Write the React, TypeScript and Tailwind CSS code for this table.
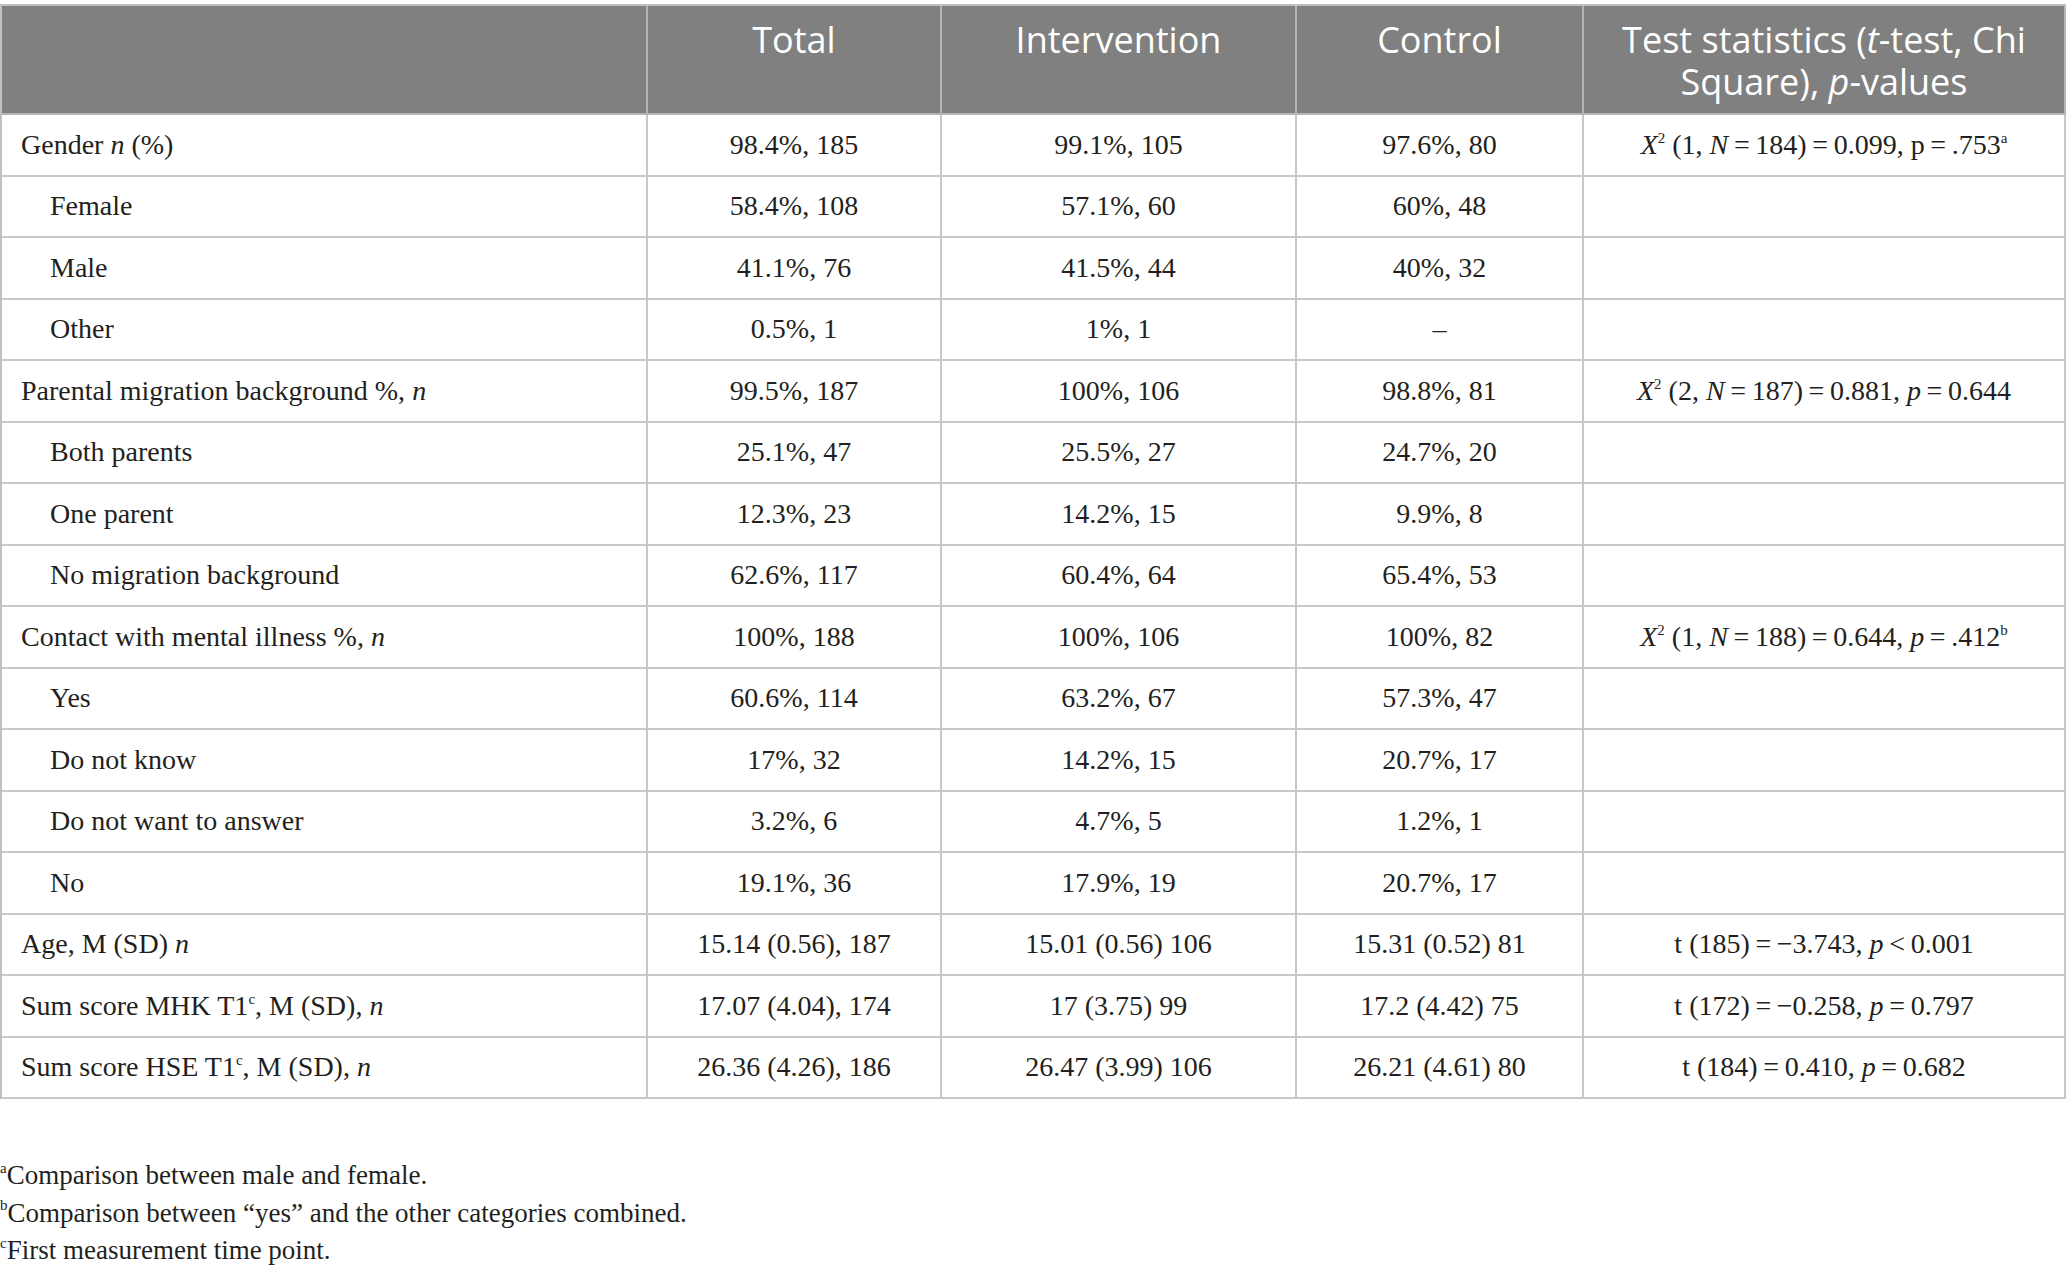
import React from "react";

type Row = {
  label: React.ReactNode;
  sub?: boolean;
  total: string;
  intervention: string;
  control: string;
  test?: React.ReactNode;
};

const eq = "\u2009=\u2009";
const minus = "\u2212";

const Sup: React.FC<{ children: React.ReactNode }> = ({ children }) => (
  <sup className="text-[15px] top-[-0.75em]">{children}</sup>
);

const rows: Row[] = [
  {
    label: (
      <>
        Gender <i>n</i> (%)
      </>
    ),
    total: "98.4%, 185",
    intervention: "99.1%, 105",
    control: "97.6%, 80",
    test: (
      <>
        <i>X</i>
        <Sup>2</Sup> (1, <i>N</i>
        {eq}184){eq}0.099, p{eq}.753<Sup>a</Sup>
      </>
    ),
  },
  { label: "Female", sub: true, total: "58.4%, 108", intervention: "57.1%, 60", control: "60%, 48" },
  { label: "Male", sub: true, total: "41.1%, 76", intervention: "41.5%, 44", control: "40%, 32" },
  { label: "Other", sub: true, total: "0.5%, 1", intervention: "1%, 1", control: "\u2013" },
  {
    label: (
      <>
        Parental migration background %, <i>n</i>
      </>
    ),
    total: "99.5%, 187",
    intervention: "100%, 106",
    control: "98.8%, 81",
    test: (
      <>
        <i>X</i>
        <Sup>2</Sup> (2, <i>N</i>
        {eq}187){eq}0.881, <i>p</i>
        {eq}0.644
      </>
    ),
  },
  { label: "Both parents", sub: true, total: "25.1%, 47", intervention: "25.5%, 27", control: "24.7%, 20" },
  { label: "One parent", sub: true, total: "12.3%, 23", intervention: "14.2%, 15", control: "9.9%, 8" },
  { label: "No migration background", sub: true, total: "62.6%, 117", intervention: "60.4%, 64", control: "65.4%, 53" },
  {
    label: (
      <>
        Contact with mental illness %, <i>n</i>
      </>
    ),
    total: "100%, 188",
    intervention: "100%, 106",
    control: "100%, 82",
    test: (
      <>
        <i>X</i>
        <Sup>2</Sup> (1, <i>N</i>
        {eq}188){eq}0.644, <i>p</i>
        {eq}.412<Sup>b</Sup>
      </>
    ),
  },
  { label: "Yes", sub: true, total: "60.6%, 114", intervention: "63.2%, 67", control: "57.3%, 47" },
  { label: "Do not know", sub: true, total: "17%, 32", intervention: "14.2%, 15", control: "20.7%, 17" },
  { label: "Do not want to answer", sub: true, total: "3.2%, 6", intervention: "4.7%, 5", control: "1.2%, 1" },
  { label: "No", sub: true, total: "19.1%, 36", intervention: "17.9%, 19", control: "20.7%, 17" },
  {
    label: (
      <>
        Age, M (SD) <i>n</i>
      </>
    ),
    total: "15.14 (0.56), 187",
    intervention: "15.01 (0.56) 106",
    control: "15.31 (0.52) 81",
    test: (
      <>
        t (185){eq}{minus}3.743, <i>p</i>
        {"\u2009<\u2009"}0.001
      </>
    ),
  },
  {
    label: (
      <>
        Sum score MHK T1<Sup>c</Sup>, M (SD), <i>n</i>
      </>
    ),
    total: "17.07 (4.04), 174",
    intervention: "17 (3.75) 99",
    control: "17.2 (4.42) 75",
    test: (
      <>
        t (172){eq}{minus}0.258, <i>p</i>
        {eq}0.797
      </>
    ),
  },
  {
    label: (
      <>
        Sum score HSE T1<Sup>c</Sup>, M (SD), <i>n</i>
      </>
    ),
    total: "26.36 (4.26), 186",
    intervention: "26.47 (3.99) 106",
    control: "26.21 (4.61) 80",
    test: (
      <>
        t (184){eq}0.410, <i>p</i>
        {eq}0.682
      </>
    ),
  },
];

const headCell =
  "bg-[#7f807f] text-white border-r-2 border-b-2 border-[#b4b5b4] text-center pt-[13px] h-[109px] text-[36px] leading-[42px] font-['Open_Sans',sans-serif]";
const bodyCell = "border-r-2 border-b-2 border-[#c8c8c8] h-[61.5px] flex items-center";

export default function App() {
  return (
    <div className="bg-white min-h-[1275px] w-[2067px] pt-[4px] text-[#231f20] font-['Liberation_Serif',serif]">
      <div className="grid grid-cols-[646px_294px_355px_287px_482px] border-l-2 border-t-2 border-[#c0c0c0] w-[2066px]">
        <div className={headCell}></div>
        <div className={headCell}>Total</div>
        <div className={headCell}>Intervention</div>
        <div className={headCell}>Control</div>
        <div className={headCell}>
          <div>
            Test statistics (<i>t</i>-test, Chi
          </div>
          <div>
            Square), <i>p</i>-values
          </div>
        </div>
        {rows.map((r, i) => (
          <React.Fragment key={i}>
            <div className={`${bodyCell} text-[28px] ${r.sub ? "pl-[48px]" : "pl-[19px]"}`}>
              <span>{r.label}</span>
            </div>
            <div className={`${bodyCell} justify-center text-[28px]`}>{r.total}</div>
            <div className={`${bodyCell} justify-center text-[28px]`}>{r.intervention}</div>
            <div className={`${bodyCell} justify-center text-[28px]`}>{r.control}</div>
            <div className={`${bodyCell} justify-center text-[28px]`}>
              <span>{r.test}</span>
            </div>
          </React.Fragment>
        ))}
      </div>
      <div className="mt-[58px] text-[27px] leading-[37.5px]">
        <p>
          <Sup>a</Sup>Comparison between male and female.
        </p>
        <p>
          <Sup>b</Sup>Comparison between “yes” and the other categories combined.
        </p>
        <p>
          <Sup>c</Sup>First measurement time point.
        </p>
      </div>
    </div>
  );
}
